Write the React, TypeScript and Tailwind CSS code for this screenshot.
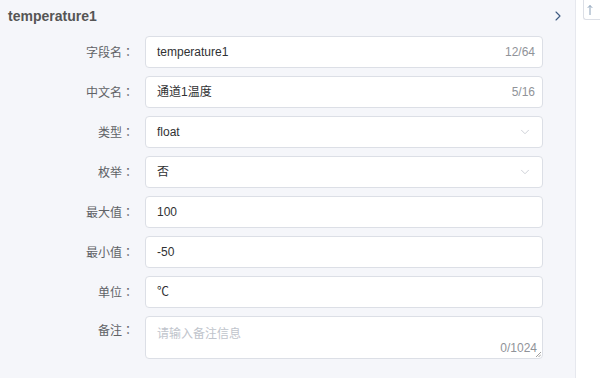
import React from "react";
import { ChevronDown, ChevronRight } from "lucide-react";

const font = { fontFamily: '"Liberation Sans", "Noto Sans CJK SC", sans-serif' };
const colonFont = { fontFamily: '"Noto Sans CJK TC", sans-serif' };

const rows: { label: string; value?: string; count?: string; select?: boolean }[] = [
  { label: "字段名", value: "temperature1", count: "12/64" },
  { label: "中文名", value: "通道1温度", count: "5/16" },
  { label: "类型", value: "float", select: true },
  { label: "枚举", value: "否", select: true },
  { label: "最大值", value: "100" },
  { label: "最小值", value: "-50" },
  { label: "单位", value: "℃" },
];

const Label = ({ text, className = "" }: { text: string; className?: string }) => (
  <div className={`w-[145px] pr-[11px] text-right text-[12px] text-[#606266] ${className}`}>
    {text}
    <span style={colonFont}>：</span>
  </div>
);

export default function App() {
  return (
    <div className="flex w-[600px] h-[378px] overflow-hidden bg-white" style={font}>
      <div className="w-[576px] shrink-0 h-full bg-[#f5f6fa] border-r border-[#e6e8ee]">
        <div className="flex items-center justify-between h-[32px] pl-2 pr-[9px]">
          <span className="text-[14px] font-bold text-[#555]">temperature1</span>
          <ChevronRight size={16} strokeWidth={1.6} className="text-[#3d5a80]" />
        </div>
        <div className="flex flex-col gap-2 pt-1">
          {rows.map((r) => (
            <div key={r.label} className="flex items-center">
              <Label text={r.label} />
              <div className="relative flex items-center w-[398px] h-[32px] bg-white border border-[#dcdfe6] rounded-[4px] pl-[11px] pr-[7px]">
                <span className="flex-1 text-[12px] text-[#303133]">{r.value}</span>
                {r.count && <span className="text-[12px] text-[#909399]">{r.count}</span>}
                {r.select && <ChevronDown size={14} strokeWidth={1.3} className="text-[#c0c4cc] mr-[3px]" />}
              </div>
            </div>
          ))}
          <div className="flex items-start">
            <Label text="备注" className="pt-[5px]" />
            <div className="relative w-[398px] h-[43px] bg-white border border-[#dcdfe6] rounded-[4px] pl-[11px] pt-[4px]">
              <span className="text-[12px] text-[#c0c4cc]">请输入备注信息</span>
              <span className="absolute right-[5px] bottom-[1px] text-[12px] text-[#909399]">0/1024</span>
              <svg className="absolute right-[1px] bottom-[1px]" width="6" height="6" viewBox="0 0 6 6">
                <path d="M1 6 L6 1 M3.5 6 L6 3.5" stroke="#888" strokeWidth="0.8" />
              </svg>
            </div>
          </div>
        </div>
      </div>
      <div className="flex-1 pl-[7px]">
        <div className="w-[24px] h-[20px] border border-[#dcdfe6] border-t-0 border-r-0 rounded-bl-[3px] flex items-center pl-[3px]">
          <svg width="6" height="12" viewBox="0 0 6 12">
            <path d="M3 1.5 V11 M0.8 3.8 L3 1.5 L5.2 3.8" stroke="#8aa0b8" strokeWidth="1" fill="none" />
          </svg>
        </div>
      </div>
    </div>
  );
}
